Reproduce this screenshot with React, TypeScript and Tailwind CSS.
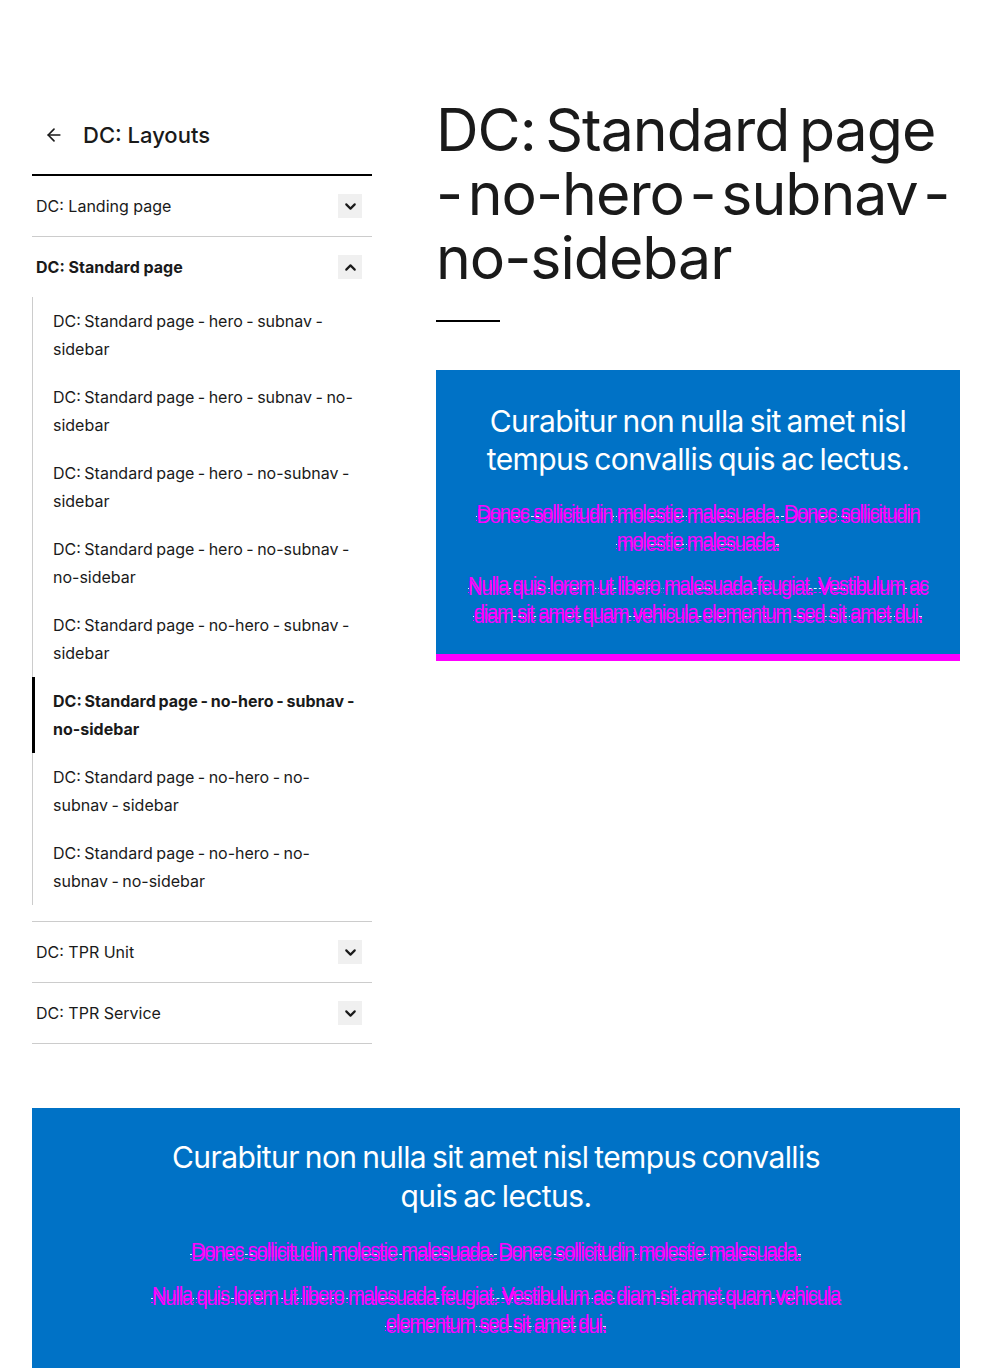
import React from "react";
import { ArrowLeft, ChevronDown, ChevronUp } from "lucide-react";

const font = { fontFamily: "Inter, 'Liberation Sans', sans-serif" };

const items = [
  "DC: Standard page - hero - subnav - sidebar",
  "DC: Standard page - hero - subnav - no-sidebar",
  "DC: Standard page - hero - no-subnav - sidebar",
  "DC: Standard page - hero - no-subnav - no-sidebar",
  "DC: Standard page - no-hero - subnav - sidebar",
  "DC: Standard page - no-hero - subnav - no-sidebar",
  "DC: Standard page - no-hero - no-subnav - sidebar",
  "DC: Standard page - no-hero - no-subnav - no-sidebar",
];

function Glitch({ children }: { children: React.ReactNode }) {
  return (
    <p
      className="text-[#ff00ff] text-[20px] leading-[28px] tracking-[-1.1px] [text-shadow:0_4px_0_#ff00ff] underline decoration-dashed decoration-[#e8f2fb] decoration-1 underline-offset-[-3px]"
      style={{ fontFamily: "'Liberation Sans', Arial, sans-serif" }}
    >
      {children}
    </p>
  );
}

function Row({ label, open, bold }: { label: string; open?: boolean; bold?: boolean }) {
  return (
    <div className="flex items-center justify-between h-[60px] pl-1 pr-[10px]">
      <span className={`text-[16px] text-[#1a1a1a] ${bold ? "font-bold" : ""}`}>{label}</span>
      <span className="w-6 h-6 bg-[#f0f0f0] flex items-center justify-center">
        {open ? <ChevronUp size={17} strokeWidth={3} /> : <ChevronDown size={17} strokeWidth={3} />}
      </span>
    </div>
  );
}

export default function App() {
  return (
    <div className="bg-white min-h-[1372px] text-[#1a1a1a]" style={font}>
      <div className="px-8 pt-[98px] flex gap-16">
        <aside className="w-[340px] shrink-0">
          <div className="flex items-center gap-[19px] pl-3 h-[76px] pb-[2px]">
            <ArrowLeft size={20} strokeWidth={2} />
            <span className="text-[22px] font-medium">DC: Layouts</span>
          </div>
          <div className="border-t-2 border-black">
            <div className="border-b border-[#cccccc]">
              <Row label="DC: Landing page" />
            </div>
            <div className="border-b border-[#cccccc] pb-4">
              <Row label="DC: Standard page" open bold />
              <ul className="border-l border-[#cccccc]">
                {items.map((it, i) => (
                  <li
                    key={i}
                    className={`py-[10px] pl-5 pr-2 text-[16px] leading-[28px] [word-spacing:-1px] ${
                      i === 5 ? "font-bold border-l-[3px] border-black -ml-px pl-[18px] -mr-2" : ""
                    }`}
                  >
                    {it}
                  </li>
                ))}
              </ul>
            </div>
            <div className="border-b border-[#cccccc]">
              <Row label="DC: TPR Unit" />
            </div>
            <div className="border-b border-[#cccccc]">
              <Row label="DC: TPR Service" />
            </div>
          </div>
        </aside>
        <main className="flex-1 min-w-0">
          <h1 className="text-[59px] leading-[64px] tracking-[-1px] [word-spacing:-6px] text-[#1a1a1a]">
            <span className="block whitespace-nowrap">DC: Standard page</span>
            <span className="block whitespace-nowrap [word-spacing:-10px]">- no-hero - subnav -</span>
            <span className="block whitespace-nowrap">no-sidebar</span>
          </h1>
          <div className="w-16 h-[2px] bg-black mt-[30px]" />
          <div className="mt-[48px] bg-[#0072c6] border-b-[7px] border-[#ff00ff] px-6 pt-[32px] pb-[28px] text-center">
            <h2 className="text-white text-[30px] leading-[38px] tracking-[-0.6px] [word-spacing:-2px]">
              Curabitur non nulla sit amet nisl tempus convallis quis ac lectus.
            </h2>
            <div className="mt-[20px] flex flex-col gap-4">
              <Glitch>Donec sollicitudin molestie malesuada. Donec sollicitudin molestie malesuada.</Glitch>
              <Glitch>Nulla quis lorem ut libero malesuada feugiat. Vestibulum ac diam sit amet quam vehicula elementum sed sit amet dui.</Glitch>
            </div>
          </div>
        </main>
      </div>
      <div className="mx-8 mt-16 bg-[#0072c6] pt-[30px] pb-8 text-center">
        <h2 className="text-white text-[30px] leading-[39px] tracking-[-0.6px] [word-spacing:-2px] max-w-[700px] mx-auto">
          Curabitur non nulla sit amet nisl tempus convallis quis ac lectus.
        </h2>
        <div className="mt-[20px] flex flex-col gap-4 max-w-[700px] mx-auto">
          <Glitch>Donec sollicitudin molestie malesuada. Donec sollicitudin molestie malesuada.</Glitch>
          <Glitch>Nulla quis lorem ut libero malesuada feugiat. Vestibulum ac diam sit amet quam vehicula elementum sed sit amet dui.</Glitch>
        </div>
      </div>
    </div>
  );
}
